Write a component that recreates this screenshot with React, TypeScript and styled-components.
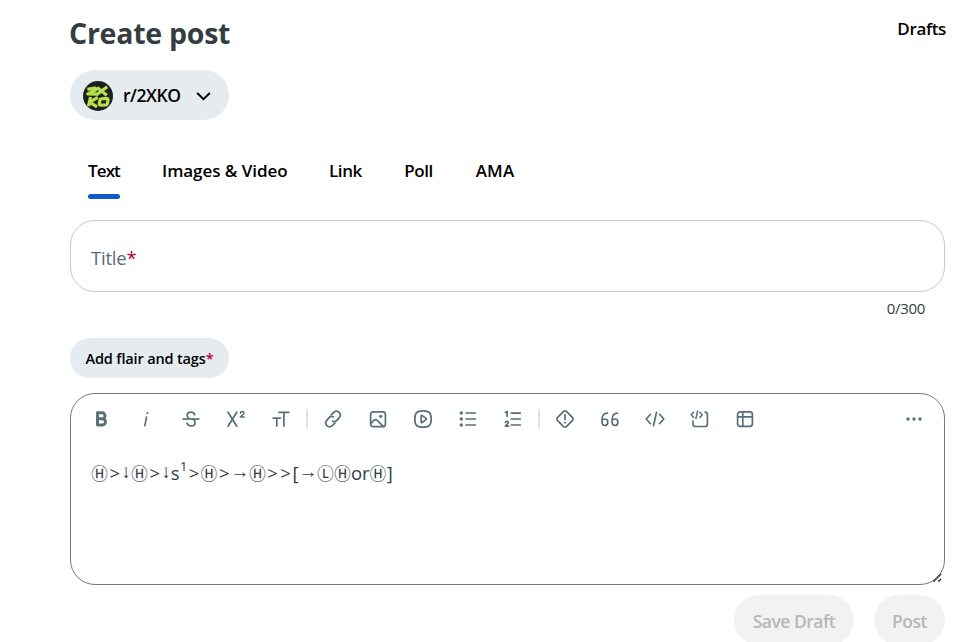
import React from 'react';
import styled, { createGlobalStyle } from 'styled-components';

const GlobalStyle = createGlobalStyle`
  * { box-sizing: border-box; }
  html, body { margin: 0; background: #fff; overflow: hidden; }
  body { font-family: "Open Sans", "Noto Sans", sans-serif; color: #000; }
  button { font-family: inherit; color: inherit; border: 0; background: none; padding: 0; margin: 0; white-space: nowrap; }
`;

const Page = styled.main`
  width: 961px;
  height: 642px;
  overflow: hidden;
  padding: 0 16px 0 70px;
  display: flex;
  flex-direction: column;
`;

const Header = styled.header`
  display: flex;
  justify-content: space-between;
  height: 70px;
  flex: none;
`;

const Heading = styled.h1`
  margin: 12px 0 0 -1px;
  font-size: 28.5px;
  line-height: 42px;
  font-weight: 700;
  letter-spacing: -0.25px;
  color: #333d42;
`;

const DraftsButton = styled.button`
  height: 24px;
  margin-top: 17px;
  margin-right: -1px;
  font-size: 17px;
  line-height: 24px;
  font-weight: 560;
  letter-spacing: -0.35px;
`;

const CommunityPicker = styled.button`
  display: flex;
  align-items: center;
  width: 159px;
  height: 50px;
  flex: none;
  padding-left: 13px;
  padding-top: 1px;
  border-radius: 25px;
  background: #e5ebee;
  svg { flex: none; }
`;

const CommunityName = styled.span`
  width: 70px;
  margin-left: 10px;
  padding-bottom: 2px;
  text-align: left;
  font-size: 17.5px;
  font-weight: 560;
  letter-spacing: -0.45px;
`;

const Tabs = styled.nav`
  display: flex;
  height: 58px;
  margin-top: 22px;
  flex: none;
  padding-left: 18px;
`;

const Tab = styled.button<{ $width: number; $tracking?: number; $active?: boolean }>`
  display: flex;
  flex-direction: column;
  width: ${p => p.$width}px;
  margin-right: 42px;
  padding-top: 17px;
  font-size: 17px;
  line-height: 24px;
  font-weight: 560;
  letter-spacing: ${p => p.$tracking ?? -0.4}px;
  &::after {
    content: "";
    width: 32px;
    height: 5px;
    margin-top: 11px;
    border-radius: 3px;
    background: ${p => (p.$active ? '#115bca' : 'transparent')};
  }
`;

const TitleField = styled.div`
  height: 72px;
  flex: none;
  margin-top: 20px;
  padding: 24px 20px 0;
  border: 1px solid #c9c9c9;
  border-radius: 25px;
  font-size: 18.5px;
  line-height: 26px;
  color: #5c6c74;
  letter-spacing: -0.2px;
`;

const Required = styled.span`
  color: #b8001f;
`;

const Counter = styled.div`
  height: 20px;
  flex: none;
  margin-top: 6px;
  padding-right: 20px;
  text-align: right;
  font-size: 15px;
  line-height: 20px;
  letter-spacing: -0.3px;
  color: #333d42;
`;

const FlairButton = styled.button`
  width: 159px;
  height: 40px;
  flex: none;
  margin-top: 20px;
  border-radius: 20px;
  background: #e5ebee;
  font-size: 14.5px;
  font-weight: 580;
  letter-spacing: -0.15px;
`;

const Editor = styled.section`
  position: relative;
  height: 192px;
  flex: none;
  margin-top: 15px;
  border: 1px solid #777;
  border-radius: 25px;
`;

const Toolbar = styled.div`
  display: flex;
  align-items: center;
  height: 50px;
  padding-left: 7px;
  padding-right: 8px;
  color: #576f76;
`;

const ToolButton = styled.button`
  display: flex;
  justify-content: center;
  align-items: center;
  width: 45px;
  height: 40px;
  flex: none;
`;

const Divider = styled.span`
  width: 2px;
  height: 20px;
  flex: none;
  margin: 0 2px 0 3px;
  background: #e2e2e2;
`;

const Spacer = styled.span`
  flex: 1;
`;

const EditorText = styled.p`
  display: flex;
  margin: 14px 0 0 20px;
  height: 30px;
  line-height: 30px;
  font-size: 18.5px;
  color: #333d42;
`;

const Glyph = styled.span<{ $width: number; $kind: string }>`
  width: ${p => p.$width}px;
  flex: none;
  display: flex;
  justify-content: center;
  white-space: nowrap;
  ${p => p.$kind === 'circle' && 'font-family: "Noto Sans CJK JP", sans-serif; font-size: 16.5px;'}
  ${p => p.$kind === 'arrow' && 'font-family: "Liberation Sans", sans-serif; font-size: 19px; transform: translateY(-1px);'}
  ${p => p.$kind === 'sup' && 'font-size: 13.5px; transform: translateY(-7px);'}
`;

const ResizeGrip = styled.svg`
  position: absolute;
  right: 0;
  bottom: 0;
`;

const Footer = styled.footer`
  display: flex;
  justify-content: flex-end;
  gap: 20px;
  margin-top: 10px;
`;

const DisabledButton = styled.button<{ $width: number }>`
  width: ${p => p.$width}px;
  height: 50px;
  flex: none;
  border-radius: 25px;
  background: #f2f2f2;
  color: #b7b7b7;
  font-size: 17.5px;
  font-weight: 580;
  letter-spacing: -0.5px;
  padding-top: 2px;
`;

const Icon = ({ children }: { children: React.ReactNode }) => (
  <svg width="22" height="22" viewBox="0 0 22 22" fill="none" stroke="currentColor" strokeWidth="1.7" strokeLinecap="round" strokeLinejoin="round">
    {children}
  </svg>
);

const icons: Record<string, React.ReactNode> = {
  bold: <path strokeWidth="2.9" d="M7.500 4.800h4.600a2.900 2.900 0 0 1 0 5.900H7.500zM7.500 10.700h5.300a3.200 3.200 0 0 1 0 6.300H7.500z" />,
  italic: <><path d="M11.500 9.200 9.900 17.600" /><path strokeWidth="2" d="M12.400 5.100v.1" /></>,
  strike: <><path strokeLinecap="butt" d="M2.500 11h17" /><path d="M14.800 6.800c-.6-1.800-2-2.700-3.900-2.700-2.200 0-3.800 1.300-3.800 3.100 0 1 .5 1.800 1.300 2.400M7 15c.5 1.800 2 2.800 4.100 2.800 2.400 0 4-1.300 4-3.400 0-1.400-.8-2.400-2.200-3.300" /></>,
  superscript: <><path d="m3 4.200 8.800 14M11.800 4.200l-8.800 14" /><path strokeWidth="1.500" d="M15.400 5.100c.1-2.200 3.600-2.200 3.600-.1 0 1.500-2.300 2.300-3.600 4h3.800" /></>,
  size: <><path d="M9 4.300h9.800M13.900 4.300V18M3.200 10.100h7.200M6.800 10.100V18" /></>,
  link: <><path d="m9 6.800 2.800-2.400c3.800-3.200 8.600 1.500 5.500 5.200l-2.400 2.800c-1.100 1.300-2.900 1.500-4.300.8" /><path d="m13 15.200-2.800 2.400c-3.800 3.200-8.600-1.500-5.500-5.200L7.100 9.600c1.100-1.300 2.900-1.500 4.300-.8" /></>,
  image: <><rect x="3.600" y="3.900" width="14.800" height="14.800" rx="2.500" /><path d="m4 15.400 3.100-3.200q1.400-1.300 2.800 0l6.300 6.100" /><circle cx="13.700" cy="8.300" r="1.600" fill="currentColor" stroke="none" /></>,
  video: <><path d="M11 2.800c6.300 0 8.200 2 8.200 8.200s-1.900 8.200-8.200 8.200-8.200-2-8.200-8.200 1.900-8.200 8.200-8.200z" /><path d="M9.200 7.700v6.600q.1.600.7.300l4.200-3q.7-.6 0-1.200l-4.200-3q-.6-.3-.7.300z" /></>,
  bullets: <><path d="M9 5h9.200M9 11h9.200M9 17h9.200" /><g fill="currentColor" stroke="none"><circle cx="4.300" cy="5" r="1.700" /><circle cx="4.300" cy="11" r="1.700" /><circle cx="4.300" cy="17" r="1.700" /></g></>,
  numbers: <><path d="M9.300 5.100h9M9.300 11h9M9.300 17h9" /><path strokeWidth="1.700" d="m3.400 4.400 1.700-1v4.800M3.400 14.500c.2-1.700 3-1.500 2.900.1-.1 1-1.700 2-2.900 3.500h3.100" /></>,
  spoiler: <><path d="M9.600 3.400q1.400-1.100 2.800 0l6.200 6.200q1.100 1.400 0 2.800l-6.200 6.200q-1.400 1.100-2.800 0l-6.200-6.200q-1.100-1.400 0-2.800z" /><path d="M11 6.700v4.800" /><path strokeWidth="2" d="M11 14.700v.1" /></>,
  quote: <path d="M8.400 5.100C4.600 5.100 3 7.800 3 11.800v2.300c0 2.100 1 3.400 2.900 3.400s2.900-1.200 2.900-3.300-1-3.200-2.900-3.200c-1.300 0-2.400.6-2.900 1.600M18.500 5.100c-3.800 0-5.400 2.700-5.400 6.700v2.300c0 2.100 1 3.400 2.900 3.400s2.900-1.200 2.900-3.300-1-3.200-2.900-3.200c-1.300 0-2.400.6-2.900 1.600" />,
  code: <path d="m6.500 6.300-4.300 4.700 4.300 4.700M15.500 6.300l4.300 4.700-4.300 4.700M12.500 4.300 9.500 17.700" />,
  codeblock: <><path d="M4 13.200V16q0 2.500 2.500 2.500h9.400q2.500 0 2.500-2.500V6.600q0-2.300-2.300-2.500" /><path strokeWidth="1.500" d="M4.600 4.200 2.200 6.700l2.400 2.700M10.900 4.200l2.400 2.500-2.400 2.700M8.600 3 6.900 10.600" /></>,
  table: <><rect x="3.600" y="3.900" width="14.800" height="14.400" rx="2.500" /><path d="M3.600 8.800h14.800M8.800 3.900v14.400" /></>,
  more: <g fill="currentColor" stroke="none"><circle cx="5" cy="11" r="1.700" /><circle cx="11" cy="11" r="1.700" /><circle cx="17" cy="11" r="1.700" /></g>,
};

const Tool = ({ name }: { name: string }) => (
  <ToolButton type="button" aria-label={name}>
    <Icon>{icons[name]}</Icon>
  </ToolButton>
);

const CommunityLogo = () => (
  <svg width="30" height="30" viewBox="0 0 30 30">
    <circle cx="15" cy="15" r="15" fill="#1c2021" />
    <g fill="none" stroke="#b9e04e" strokeWidth="3.200" strokeLinejoin="round">
      <path d="M4.400 8.400 12 7q2 .7.300 2.300L4.700 12.900 13.800 13.100M14.200 6.500l9.600 7.800M24.200 5.800l-11 8.200" />
      <path d="m7.500 16-2 9.200M14.800 16.300l-8.100 4.900 7.300 4.600M18 17.800l5.500-.4q1.800.2 1.600 1.800l-.8 3.600q-.3 1.200-1.800 1.200l-4.500.2q-1.900-.1-1.700-1.600l.6-3.200q.2-1.200 1.100-1.600" />
    </g>
  </svg>
);

// Each entry is a character, its advance in pixels, and the face it is set in.
const combo: Array<[string, number, string]> = [
  ['Ⓗ', 17, 'circle'], ['>', 13.5, 'text'], ['↓', 9.500, 'arrow'],
  ['Ⓗ', 17, 'circle'], ['>', 13.5, 'text'], ['↓', 9.500, 'arrow'],
  ['s', 8.500, 'text'], ['1', 8, 'sup'], ['>', 13, 'text'],
  ['Ⓗ', 17, 'circle'], ['>', 13.5, 'text'], ['→', 18, 'arrow'],
  ['Ⓗ', 17, 'circle'], ['>', 13, 'text'], ['>', 13, 'text'],
  ['[', 7, 'text'], ['→', 18, 'arrow'], ['Ⓛ', 17, 'circle'],
  ['Ⓗ', 17, 'circle'], ['o', 11, 'text'], ['r', 7.500, 'text'],
  ['Ⓗ', 17, 'circle'], [']', 6.500, 'text'],
];

export default function App() {
  return (
    <>
      <GlobalStyle />
      <Page>
        <Header>
          <Heading>Create post</Heading>
          <DraftsButton>Drafts</DraftsButton>
        </Header>
        <CommunityPicker>
          <CommunityLogo />
          <CommunityName>r/2XKO</CommunityName>
          <svg width="22" height="22" viewBox="0 0 22 22" fill="none" stroke="#000" strokeWidth="2" strokeLinecap="round">
            <path d="m4.700 8.500 5.800 5.600L16.300 8.500" />
          </svg>
        </CommunityPicker>
        <Tabs>
          <Tab $width={32} $tracking={-0.9} $active>Text</Tab>
          <Tab $width={125} $tracking={-0.05}>Images &amp; Video</Tab>
          <Tab $width={33}>Link</Tab>
          <Tab $width={29}>Poll</Tab>
          <Tab $width={40} $tracking={0.2}>AMA</Tab>
        </Tabs>
        <TitleField>Title<Required>*</Required></TitleField>
        <Counter>0/300</Counter>
        <FlairButton>Add flair and tags<Required>*</Required></FlairButton>
        <Editor>
          <Toolbar>
            {['bold', 'italic', 'strike', 'superscript', 'size'].map(n => <Tool key={n} name={n} />)}
            <Divider />
            {['link', 'image', 'video', 'bullets', 'numbers'].map(n => <Tool key={n} name={n} />)}
            <Divider />
            {['spoiler', 'quote', 'code', 'codeblock', 'table'].map(n => <Tool key={n} name={n} />)}
            <Spacer />
            <Tool name="more" />
          </Toolbar>
          <EditorText>
            {combo.map(([text, width, kind], i) => (
              <Glyph key={i} $width={width} $kind={kind}>{text}</Glyph>
            ))}
          </EditorText>
          <ResizeGrip width="14" height="14" viewBox="0 0 14 14" stroke="#333" strokeWidth="1.800" strokeDasharray="1.800 .5">
            <path d="M3.500 11.500 11 4M8.500 11.500 11 9" />
          </ResizeGrip>
        </Editor>
        <Footer>
          <DisabledButton $width={120} disabled>Save Draft</DisabledButton>
          <DisabledButton $width={71} disabled>Post</DisabledButton>
        </Footer>
      </Page>
    </>
  );
}
